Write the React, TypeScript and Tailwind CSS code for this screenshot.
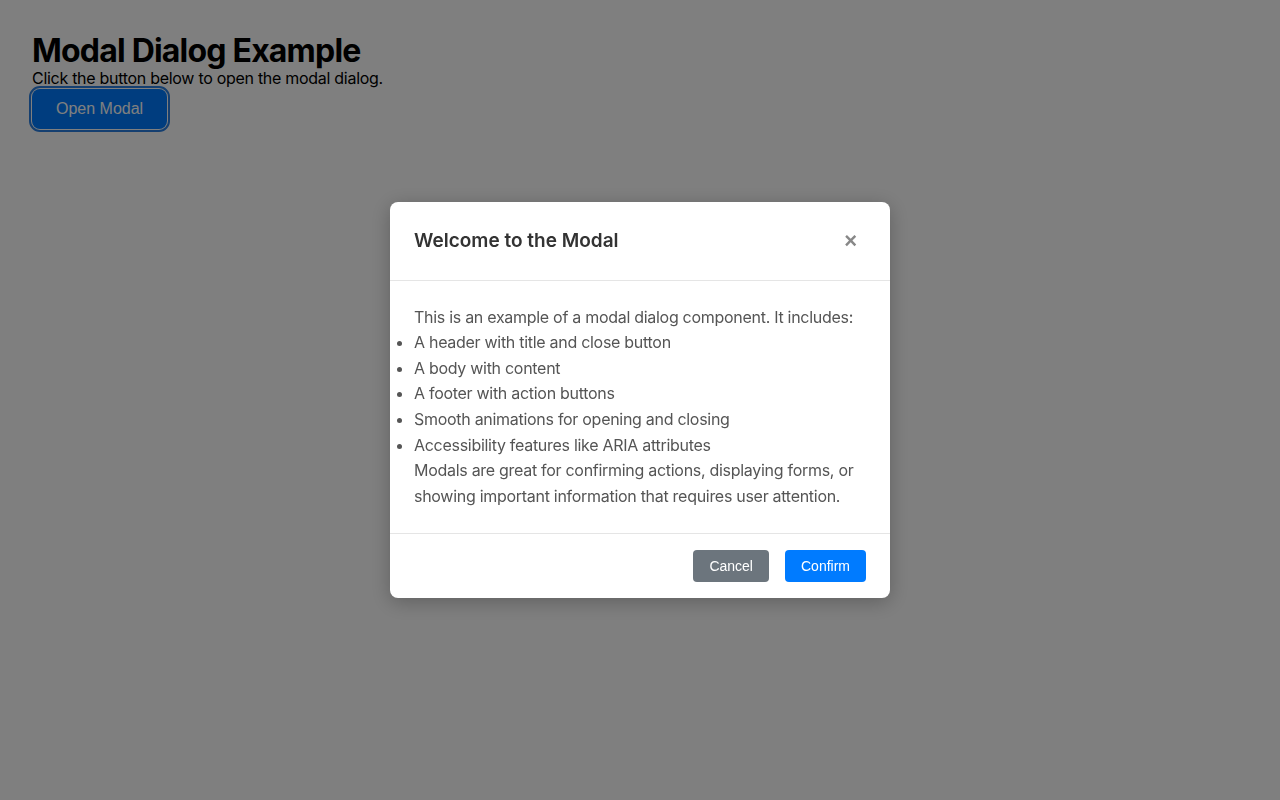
import { useState } from 'react';

const items = [
    'A header with title and close button',
    'A body with content',
    'A footer with action buttons',
    'Smooth animations for opening and closing',
    'Accessibility features like ARIA attributes',
];

export default function App() {
    const [open, setOpen] = useState(true);

    return (
        <div className="min-h-screen bg-white p-8 font-['Inter',sans-serif] text-black">
            <h1 className="text-[32px] font-bold leading-[1.2] tracking-[-0.025em]">Modal Dialog Example</h1>
            <p className="text-base leading-4 tracking-[-0.018em]">Click the button below to open the modal dialog.</p>
            <button
                onClick={() => setOpen(true)}
                className="mt-[3px] rounded-lg bg-[#007bff] px-6 py-[11px] font-['Liberation_Sans',sans-serif] text-base leading-[18px] text-white outline-2 outline-offset-1 outline-[#2a7fe0]"
            >
                Open Modal
            </button>

            {/* Overlay */}
            {open && (
                <div className="fixed inset-0 flex items-center justify-center bg-black/50">
                    <div
                        role="dialog"
                        aria-modal="true"
                        aria-labelledby="modal-title"
                        className="w-[500px] rounded-lg bg-white shadow-[0_4px_20px_rgba(0,0,0,0.25)]"
                    >
                        <div className="flex items-center justify-between border-b border-[#e5e5e5] p-6">
                            <h2 id="modal-title" className="text-[19px] font-semibold leading-[30px] text-[#333]">
                                Welcome to the Modal
                            </h2>
                            <button
                                aria-label="Close"
                                onClick={() => setOpen(false)}
                                className="mr-[5px] px-1 font-['Liberation_Sans',sans-serif] text-[22px] font-bold leading-none text-[#888]"
                            >
                                ×
                            </button>
                        </div>
                        <div className="p-6 text-base leading-[1.6] tracking-[-0.018em] text-[#555]">
                            <p>This is an example of a modal dialog component. It includes:</p>
                            <ul className="list-outside list-disc pl-0">
                                {items.map((item) => (
                                    <li key={item}>{item}</li>
                                ))}
                            </ul>
                            <p>
                                Modals are great for confirming actions, displaying forms, or showing important
                                information that requires user attention.
                            </p>
                        </div>
                        <div className="flex justify-end gap-4 border-t border-[#e5e5e5] px-6 py-4 font-['Liberation_Sans',sans-serif]">
                            <button
                                onClick={() => setOpen(false)}
                                className="rounded bg-[#6c757d] px-4 py-2 text-sm leading-4 text-white"
                            >
                                Cancel
                            </button>
                            <button
                                onClick={() => setOpen(false)}
                                className="rounded bg-[#007bff] px-4 py-2 text-sm leading-4 text-white"
                            >
                                Confirm
                            </button>
                        </div>
                    </div>
                </div>
            )}
        </div>
    );
}
